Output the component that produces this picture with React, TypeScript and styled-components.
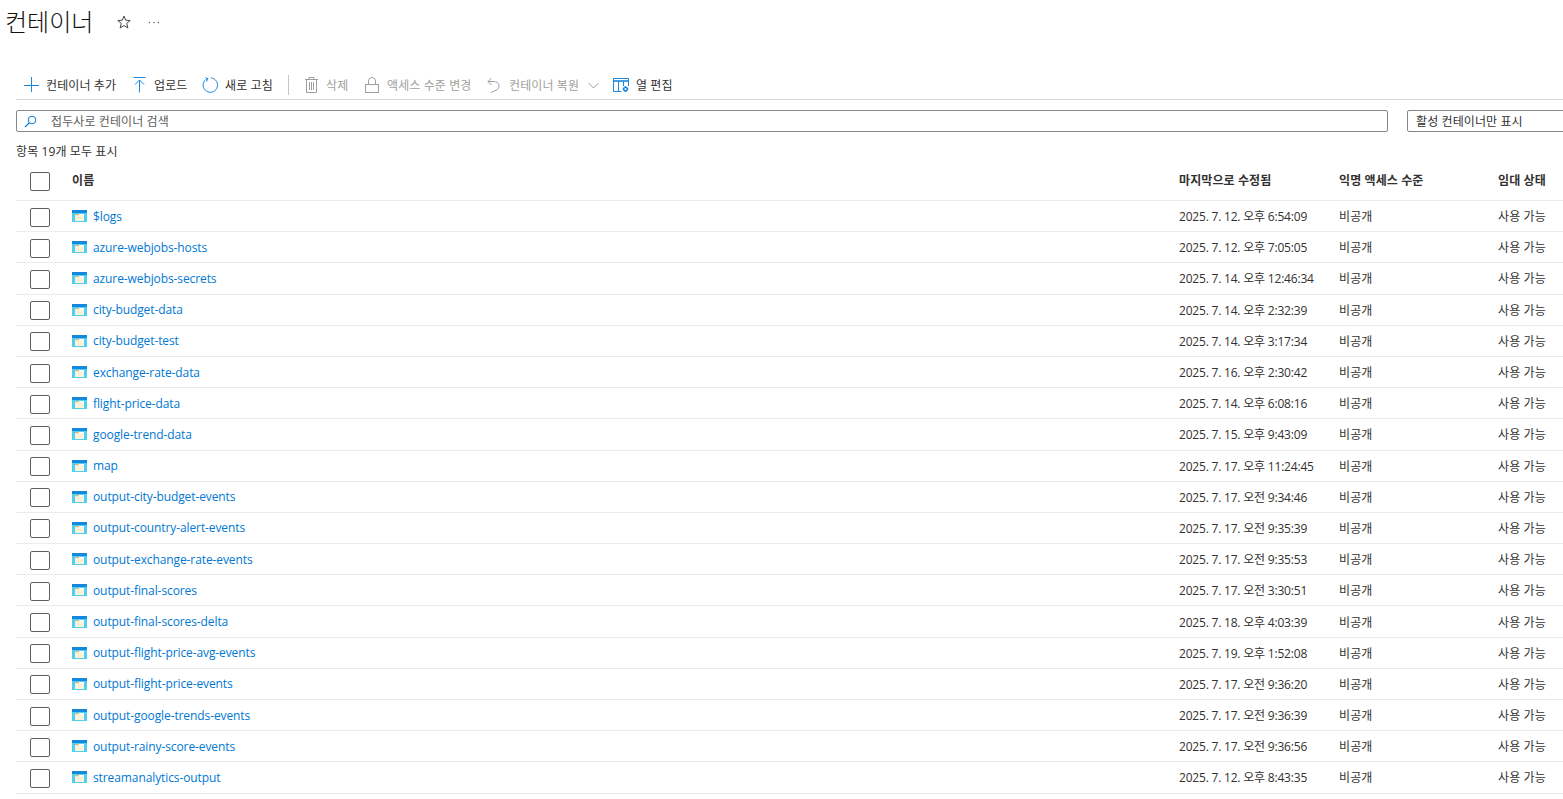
import React from "react";
import styled, { createGlobalStyle } from "styled-components";

const FONT = `"Open Sans", "Noto Sans CJK KR", sans-serif`;

const Global = createGlobalStyle`
  html, body { margin: 0; padding: 0; background: #fff; overflow: hidden; }
  body { font-family: ${FONT}; color: #323130; }
`;

const Page = styled.div`
  width: 1563px;
  height: 799px;
  overflow: hidden;
`;
const TitleBar = styled.header`
  display: flex;
  align-items: center;
  height: 44px;
  padding-left: 5px;
`;
const Title = styled.h1`
  margin: 0;
  font-size: 24px;
  font-weight: 300;
  line-height: 44px;
  color: #111;
  width: 112px;
`;
const TitleIcon = styled.span`
  display: inline-flex;
  width: 31px;
  color: #444;
`;
const Content = styled.div`
  padding-left: 16px;
`;
const Toolbar = styled.div`
  display: flex;
  align-items: center;
  height: 28px;
  margin-top: 27px;
  padding-left: 7px;
  border-bottom: 1px solid #d6d6d6;
  box-sizing: content-box;
`;
const ToolBtn = styled.div<{ $disabled?: boolean; $w: number }>`
  display: flex;
  align-items: center;
  gap: 6px;
  width: ${(p) => p.$w}px;
  flex: none;
  font-size: 12px;
  letter-spacing: 0.1px;
  white-space: nowrap;
  color: ${(p) => (p.$disabled ? "#a19f9d" : "#323130")};
`;
const ToolIcon = styled.span<{ $inset?: number }>`
  display: inline-flex;
  width: 17px;
  height: 18px;
  flex: none;
  box-sizing: border-box;
  padding-left: ${(p) => p.$inset ?? 0}px;
  align-items: center;
  justify-content: flex-start;
`;
const Caret = styled.span`
  display: inline-flex;
  margin-left: 3px;
`;
const Divider = styled.div`
  width: 1px;
  height: 20px;
  background: #c8c6c4;
  margin: 0 14px 0 0;
  flex: none;
`;
const FilterRow = styled.div`
  display: flex;
  gap: 19px;
  margin-top: 10px;
  width: 1600px;
`;
const SearchBox = styled.div`
  display: flex;
  align-items: center;
  width: 1372px;
  height: 22px;
  box-sizing: border-box;
  border: 1px solid #8a8886;
  border-radius: 2px;
  padding-left: 7px;
  font-size: 12px;
  letter-spacing: 0.1px;
  color: #605e5c;
  gap: 14px;
`;
const SelectBox = styled.div`
  display: flex;
  align-items: center;
  width: 190px;
  height: 22px;
  box-sizing: border-box;
  border: 1px solid #8a8886;
  border-radius: 2px;
  padding-left: 8px;
  font-size: 12px;
  letter-spacing: 0.1px;
  color: #323130;
`;
const Count = styled.div`
  font-size: 12px;
  line-height: 16px;
  margin-top: 12px;
  letter-spacing: 0.1px;
  color: #323130;
`;
const Grid = styled.div`
  width: 1547px;
`;
const Row = styled.div<{ $head?: boolean }>`
  display: grid;
  grid-template-columns: 56px 1107px 160px 159px 65px;
  align-items: center;
  height: ${(p) => (p.$head ? "41px" : "31.2px")};
  box-sizing: border-box;
  border-bottom: 1px solid #edebe9;
  font-size: 12px;
  font-weight: ${(p) => (p.$head ? 700 : 400)};
  letter-spacing: 0.1px;
  white-space: nowrap;
  color: #323130;
`;
const Check = styled.span`
  display: block;
  width: 20px;
  height: 19px;
  margin: 2px 0 0 14px;
  box-sizing: border-box;
  border: 1px solid #605e5c;
  border-radius: 2px;
`;
const NameCell = styled.div`
  display: flex;
  align-items: center;
  gap: 6px;
`;
const Link = styled.a`
  color: #0078d4;
  text-decoration: none;
  letter-spacing: -0.1px;
`;
const DateCell = styled.span`
  letter-spacing: -0.2px;
`;

const rows: [string, string][] = [
  ["$logs", "2025. 7. 12. 오후 6:54:09"],
  ["azure-webjobs-hosts", "2025. 7. 12. 오후 7:05:05"],
  ["azure-webjobs-secrets", "2025. 7. 14. 오후 12:46:34"],
  ["city-budget-data", "2025. 7. 14. 오후 2:32:39"],
  ["city-budget-test", "2025. 7. 14. 오후 3:17:34"],
  ["exchange-rate-data", "2025. 7. 16. 오후 2:30:42"],
  ["flight-price-data", "2025. 7. 14. 오후 6:08:16"],
  ["google-trend-data", "2025. 7. 15. 오후 9:43:09"],
  ["map", "2025. 7. 17. 오후 11:24:45"],
  ["output-city-budget-events", "2025. 7. 17. 오전 9:34:46"],
  ["output-country-alert-events", "2025. 7. 17. 오전 9:35:39"],
  ["output-exchange-rate-events", "2025. 7. 17. 오전 9:35:53"],
  ["output-final-scores", "2025. 7. 17. 오전 3:30:51"],
  ["output-final-scores-delta", "2025. 7. 18. 오후 4:03:39"],
  ["output-flight-price-avg-events", "2025. 7. 19. 오후 1:52:08"],
  ["output-flight-price-events", "2025. 7. 17. 오전 9:36:20"],
  ["output-google-trends-events", "2025. 7. 17. 오전 9:36:39"],
  ["output-rainy-score-events", "2025. 7. 17. 오전 9:36:56"],
  ["streamanalytics-output", "2025. 7. 12. 오후 8:43:35"],
];

const ContainerIcon = () => (
  <svg width="15" height="12" viewBox="0 0 15 12" style={{ flex: "none" }}>
    <rect width="15" height="12" fill="#50d0f0" />
    <rect width="15" height="3" fill="#1488dc" />
    <rect x="3" y="4" width="9" height="7" fill="#fff" />
    <rect x="3" y="4" width="4" height="1.5" fill="#e6b873" />
    <rect x="3" y="5.5" width="9" height="5.5" fill="#fdf1d8" />
  </svg>
);

const Plus = () => (
  <svg width="16" height="16" viewBox="0 0 16 16" stroke="#1a86dc" fill="none">
    <path d="M8.5 0v15M1 8.5h15" />
  </svg>
);
const Upload = () => (
  <svg width="13" height="16" viewBox="0 0 13 16" stroke="#1a86dc" fill="none">
    <path d="M.5 .5h12M6.5 15.5V3M2 7.5 6.5 3 11 7.5" />
  </svg>
);
const Refresh = () => (
  <svg width="16" height="16" viewBox="0 0 16 16" stroke="#1a86dc" fill="none">
    <path d="M5.4 1.5a7.2 7.2 0 1 0 3.6-.6" />
    <path d="M3.6 .4 6 1.8 4.4 4.6" />
  </svg>
);
const Trash = () => (
  <svg width="13" height="16" viewBox="0 0 13 16" stroke="#a19f9d" fill="none">
    <path d="M0 2.5h13M4 2.5V.5h5v2M1.5 2.5v13h10v-13" />
    <path d="M4.5 5v8M6.5 5v8M8.5 5v8" />
  </svg>
);
const Lock = () => (
  <svg width="14" height="16" viewBox="0 0 14 16" stroke="#a19f9d" fill="none">
    <rect x=".5" y="7.5" width="13" height="8" />
    <path d="M3.5 7.5V4a3.5 3.5 0 0 1 7 0v3.5" />
  </svg>
);
const Restore = () => (
  <svg width="13" height="16" viewBox="0 0 13 16" stroke="#a19f9d" fill="none">
    <path d="M1 4.5h6.5a4.5 4.5 0 0 1 2.6 8.2L4 15.6M4.5 1 1 4.5 4.5 8" />
  </svg>
);
const Chevron = () => (
  <svg width="11" height="7" viewBox="0 0 11 7" stroke="#a19f9d" fill="none">
    <path d="M.5 1 5.5 6l5-5" />
  </svg>
);
const Columns = () => (
  <svg width="16" height="14" viewBox="0 0 16 14" fill="none" stroke="#1a86dc">
    <path d="M.5 13.5V.5h15V8" />
    <path d="M0 3h16" strokeWidth="1.6" />
    <path d="M.5 13.5h8M5.5 3v10.5M10.5 3v5" />
    <circle cx="12.5" cy="11" r="1.8" strokeWidth="1.5" />
    <path d="M12.5 8v1M12.5 13v1M9.5 11h1M14.5 11h1" />
  </svg>
);
const Search = () => (
  <svg width="13" height="13" viewBox="0 0 13 13" stroke="#0078d4" fill="none">
    <circle cx="8" cy="5" r="3.8" />
    <path d="M5.2 7.8 1 12" strokeWidth="1.2" />
  </svg>
);
const Star = () => (
  <svg width="14" height="14" viewBox="0 0 14 14" stroke="#444" fill="none">
    <path d="M7 1 8.7 5.2 13.2 5.5 9.7 8.4 10.9 13 7 10.5 3.1 13 4.3 8.4.8 5.5 5.3 5.2Z" />
  </svg>
);
const More = () => (
  <svg width="12" height="3" viewBox="0 0 12 3" fill="#555">
    <circle cx="1.5" cy="1.5" r=".7" />
    <circle cx="6" cy="1.5" r=".7" />
    <circle cx="10.5" cy="1.5" r=".7" />
  </svg>
);

export default function App() {
  return (
    <Page>
      <Global />
      <TitleBar>
        <Title>컨테이너</Title>
        <TitleIcon><Star /></TitleIcon>
        <TitleIcon><More /></TitleIcon>
      </TitleBar>
      <Content>
        <Toolbar>
          <ToolBtn $w={108}><ToolIcon><Plus /></ToolIcon>컨테이너 추가</ToolBtn>
          <ToolBtn $w={71}><ToolIcon $inset={2}><Upload /></ToolIcon>업로드</ToolBtn>
          <ToolBtn $w={86}><ToolIcon><Refresh /></ToolIcon>새로 고침</ToolBtn>
          <Divider />
          <ToolBtn $w={61} $disabled><ToolIcon $inset={2}><Trash /></ToolIcon>삭제</ToolBtn>
          <ToolBtn $w={122} $disabled><ToolIcon $inset={1}><Lock /></ToolIcon>액세스 수준 변경</ToolBtn>
          <ToolBtn $w={127} $disabled>
            <ToolIcon $inset={1}><Restore /></ToolIcon>컨테이너 복원<Caret><Chevron /></Caret>
          </ToolBtn>
          <ToolBtn $w={70}><ToolIcon><Columns /></ToolIcon>열 편집</ToolBtn>
        </Toolbar>
        <FilterRow>
          <SearchBox><Search />접두사로 컨테이너 검색</SearchBox>
          <SelectBox>활성 컨테이너만 표시</SelectBox>
        </FilterRow>
        <Count>항목 19개 모두 표시</Count>
        <Grid>
          <Row $head>
            <Check />
            <span>이름</span>
            <span>마지막으로 수정됨</span>
            <span>익명 액세스 수준</span>
            <span>임대 상태</span>
          </Row>
          {rows.map(([name, date]) => (
            <Row key={name}>
              <Check />
              <NameCell><ContainerIcon /><Link>{name}</Link></NameCell>
              <DateCell>{date}</DateCell>
              <span>비공개</span>
              <span>사용 가능</span>
            </Row>
          ))}
        </Grid>
      </Content>
    </Page>
  );
}
